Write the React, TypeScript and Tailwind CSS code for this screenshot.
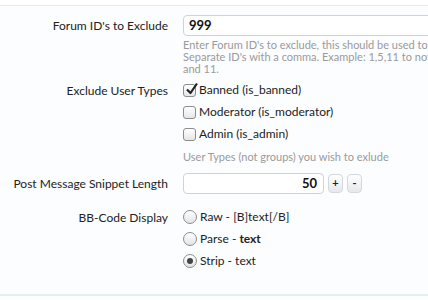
import React from 'react'

const font = { fontFamily: 'Lato, "Open Sans", sans-serif' }

function Label({ children, className = '' }: { children: React.ReactNode, className?: string }) {
  return (
    <div className={`w-[168px] shrink-0 whitespace-nowrap text-right text-[12px] text-[#222] ${className}`}>{children}</div>
  )
}

function Check({ checked, label }: { checked?: boolean, label: string }) {
  return (
    <label className="flex h-[22px] items-center gap-[3px] text-[12px] text-[#222]">
      <span className="relative flex h-[13px] w-[13px] items-center justify-center rounded-[3px] border border-[#8d8d8d] bg-gradient-to-b from-white to-[#e6e6e6]">
        {checked && (
          <svg viewBox="0 0 14 14" className="absolute -top-[3px] left-[1px] h-[14px] w-[14px]">
            <path d="M2 7.5 L5.5 11 L12 1.5" fill="none" stroke="#222" strokeWidth="2.2" strokeLinejoin="round" />
          </svg>
        )}
      </span>
      {label}
    </label>
  )
}

function Radio({ checked, children }: { checked?: boolean, children: React.ReactNode }) {
  return (
    <label className="flex h-[22px] items-center gap-[3px] text-[12px] text-[#222]">
      <span className="flex h-[14px] w-[14px] items-center justify-center rounded-full border border-[#8d8d8d] bg-gradient-to-b from-white to-[#e4e4e4]">
        {checked && <span className="h-[6px] w-[6px] rounded-full bg-[#444]" />}
      </span>
      {children}
    </label>
  )
}

export default function App() {
  return (
    <div className="h-[300px] w-[428px] overflow-hidden bg-white" style={font}>
      <div className="mt-[5px] h-[289px] border-t border-[#e6e9ee] bg-[#fcfdff]">
        <div className="flex items-start gap-[15px] pt-[9px]">
          <Label className="pt-[2px]">Forum ID's to Exclude</Label>
          <div className="min-w-0 flex-1">
            <div className="h-[21px] w-[300px] rounded-l-[4px] border border-[#cfd3d8] bg-white pl-[5px] text-[13px] font-bold leading-[19px] text-[#111]">999</div>
            <div className="mt-[3px] whitespace-nowrap text-[11px] leading-[12px] text-[#9a9a9a]">
              <p>Enter Forum ID's to exclude, this should be used to stop posts from being shown.</p>
              <p>Separate ID's with a comma. Example: 1,5,11 to not include Forums 1, 5</p>
              <p>and 11.</p>
            </div>
          </div>
        </div>

        <div className="mt-[4px] flex items-start gap-[15px]">
          <Label className="pt-[3px]">Exclude User Types</Label>
          <div>
            <Check checked label="Banned (is_banned)" />
            <Check label="Moderator (is_moderator)" />
            <Check label="Admin (is_admin)" />
            <p className="mt-[5px] text-[11px] leading-[14px] text-[#9a9a9a]">User Types (not groups) you wish to exlude</p>
          </div>
        </div>

        <div className="mt-[9px] flex items-center gap-[15px]">
          <Label>Post Message Snippet Length</Label>
          <div className="flex items-center gap-[4px]">
            <div className="h-[21px] w-[141px] rounded-[4px] border border-[#cfd3d8] bg-white pr-[6px] text-right text-[13px] font-bold leading-[19px] text-[#111]">50</div>
            <button className="flex h-[19px] w-[15px] items-center justify-center rounded-[4px] border border-[#d4d8dd] bg-gradient-to-b from-white to-[#e5e8ec] text-[11px] font-bold text-[#222]">+</button>
            <button className="flex h-[19px] w-[15px] items-center justify-center rounded-[4px] border border-[#d4d8dd] bg-gradient-to-b from-white to-[#e5e8ec] text-[11px] font-bold text-[#222]">-</button>
          </div>
        </div>

        <div className="mt-[12px] flex items-start gap-[15px]">
          <Label className="pt-[3px]">BB-Code Display</Label>
          <div>
            <Radio>Raw - [B]text[/B]</Radio>
            <Radio>Parse - <b>text</b></Radio>
            <Radio checked>Strip - text</Radio>
          </div>
        </div>
      </div>
      <div className="h-[2px] bg-[#e3f0f2]" />
    </div>
  )
}
